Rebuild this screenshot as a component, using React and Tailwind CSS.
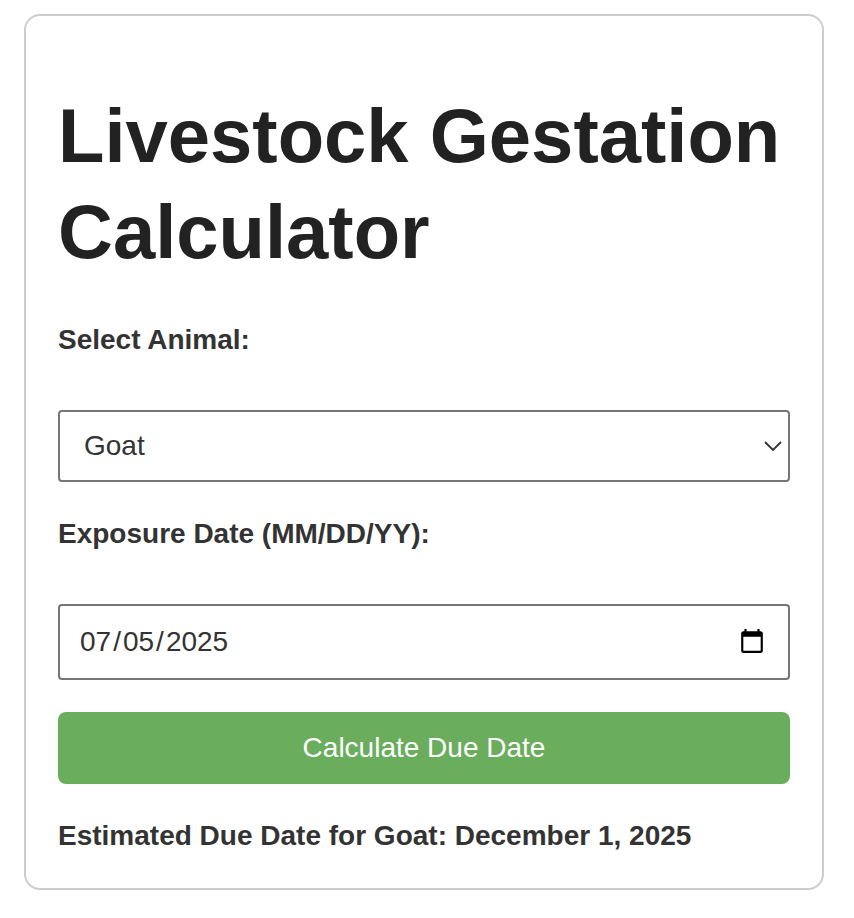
import { useState } from 'react';

const animals = [
  { name: 'Cow', days: 283 },
  { name: 'Goat', days: 149 },
  { name: 'Sheep', days: 147 },
  { name: 'Pig', days: 114 },
  { name: 'Horse', days: 340 },
];

const getDueDate = (name, date) => {
  const animal = animals.find(a => a.name === name);
  const due = new Date(`${date}T12:00:00`);
  due.setDate(due.getDate() + animal.days);
  return due.toLocaleDateString('en-US', { year: 'numeric', month: 'long', day: 'numeric' });
};

const App = () => {
  const [animal, setAnimal] = useState('Goat');
  const [date, setDate] = useState('2025-07-05');
  const [result, setResult] = useState({ animal: 'Goat', due: getDueDate('Goat', '2025-07-05') });

  const handleCalculate = () => {
    if (!date) { setResult(null); return; }
    setResult({ animal, due: getDueDate(animal, date) });
  };

  const labelClass = "block text-[28px] leading-8 font-bold mb-[54px]";
  const dateFieldClass = "[&::-webkit-datetime-edit-month-field]:px-0.5 [&::-webkit-datetime-edit-day-field]:px-0.5 [&::-webkit-datetime-edit-year-field]:px-0.5";

  return (
    <div className="bg-white pt-[14px] pb-7 pl-6 pr-[30px] font-['Liberation_Sans',Arial,sans-serif] text-[#333]">
      <main className="border-2 border-[#ccc] rounded-2xl px-8 pt-[72px] pb-9">
        <h1 className="text-[76px] leading-24 font-bold text-[#222] mb-11">Livestock Gestation Calculator</h1>

        <label htmlFor="animal" className={labelClass}>Select Animal:</label>
        <div className="grid items-center mb-9">
          <select
            id="animal"
            value={animal}
            onChange={(e) => setAnimal(e.target.value)}
            className="col-start-1 row-start-1 w-full h-[72px] appearance-none bg-white border-2 border-[#767676] rounded px-6 text-[28px]"
          >
            {animals.map(a => <option key={a.name} value={a.name}>{a.name}</option>)}
          </select>
          <svg viewBox="0 0 18 11" className="col-start-1 row-start-1 justify-self-end w-[18px] h-[11px] mr-2 pointer-events-none" aria-hidden="true">
            <path d="M1 1l8 8 8-8" fill="none" stroke="#333" strokeWidth="1.8" />
          </svg>
        </div>

        <label htmlFor="date" className={labelClass}>Exposure Date (MM/DD/YY):</label>
        <input
          id="date"
          type="date"
          value={date}
          onChange={(e) => setDate(e.target.value)}
          className={`block w-full h-[76px] border-2 border-[#767676] rounded pl-[18px] pr-5 mb-8 text-[28px] ${dateFieldClass}`}
        />

        <button type="button" onClick={handleCalculate} className="block w-full h-[72px] bg-[#69ad5d] text-white text-[28px] rounded-lg">
          Calculate Due Date
        </button>

        {result && (
          <p className="text-[28px] leading-8 font-bold mt-9">Estimated Due Date for {result.animal}: {result.due}</p>
        )}
      </main>
    </div>
  );
};

export default App;
